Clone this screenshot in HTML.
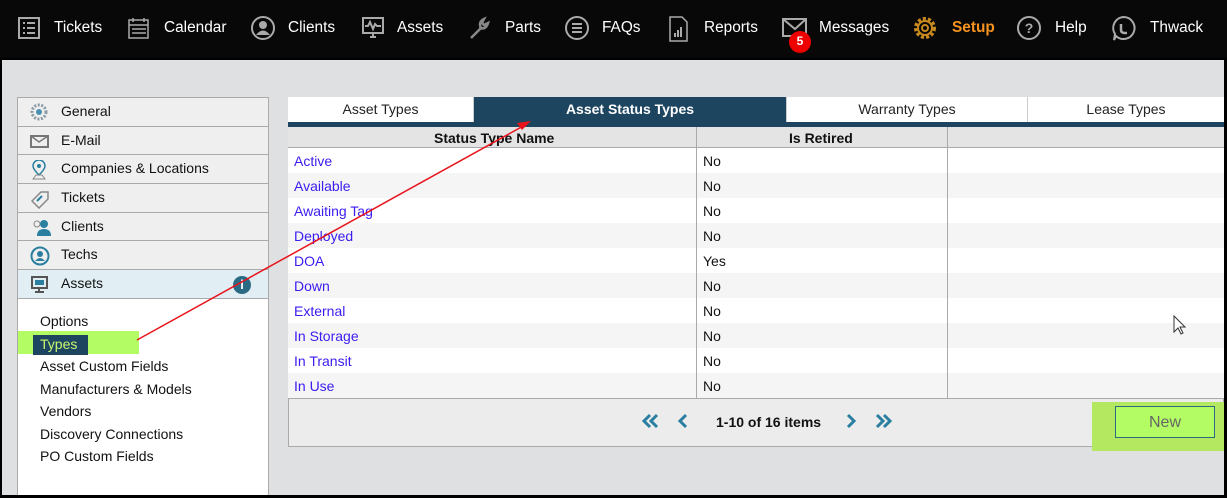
<!DOCTYPE html>
<html><head><meta charset="utf-8"><style>
*{box-sizing:border-box;margin:0;padding:0}
body{width:1227px;height:498px;background:#000;font-family:"Liberation Sans",sans-serif;position:relative;overflow:hidden;font-size:14px}
.nav{position:absolute;left:0;top:0;width:1227px;height:58px;background:#080808;color:#fff;font-size:15.4px}
.ni{position:absolute;top:17px;height:22px;line-height:22px;white-space:nowrap}
.ni svg{position:absolute;left:0;top:-1px}
.main{position:absolute;left:2px;top:60px;width:1222px;height:435px;background:#dfe0e2}
.side{position:absolute;left:17px;top:97px;width:252px;height:398px;background:#fff;border:1px solid #aaa;border-bottom:none}
.si{height:28.7px;border-bottom:1px solid #aaa;background:#efefef;position:relative;line-height:27px;padding-left:43px;color:#111}
.si svg{position:absolute;left:12px;top:5px}
.sub{position:absolute;left:22px;font-size:14px;color:#111}
.tbl{position:absolute;left:288px;top:97px;width:936px;height:350px;background:#ececec;border:1px solid #aaa;border-top:none}
.tabs{position:absolute;left:288px;top:97px;width:936px;height:25px;background:#fff}
.tab{position:absolute;top:0;height:25px;line-height:24px;text-align:center;color:#222;border-right:1px solid #ccc}
.bar{position:absolute;left:288px;top:122px;width:936px;height:5px;background:#1e4560}
.hdr{position:absolute;left:288px;top:127px;width:936px;height:21px;background:#e4e4e4;border-bottom:1px solid #aaa;font-weight:bold;color:#111}
.row{position:absolute;left:288px;width:936px;height:25px;line-height:26px}
.c1{position:absolute;left:6px;color:#3a1cf0}
.c2{position:absolute;left:415px;color:#111}
.vl{position:absolute;top:127px;width:1px;height:271px;background:#aaa}
</style></head><body>
<div class="nav">
 <div class="ni" style="left:17px;padding-left:37px"><svg width="24" height="24"><rect x="2" y="2" width="20" height="20" fill="none" stroke="#aaa" stroke-width="2"/><path d="M6 7h2M10 7h8M6 12h2M10 12h8M6 17h2M10 17h8" stroke="#aaa" stroke-width="2"/></svg>Tickets</div>
 <div class="ni" style="left:127px;padding-left:37px"><svg width="24" height="24"><rect x="2" y="4" width="19" height="18" fill="none" stroke="#aaa" stroke-width="1.5"/><path d="M2 9h19M6 2v4M17 2v4M5 13h14M5 17h14" stroke="#aaa" stroke-width="1.5"/></svg>Calendar</div>
 <div class="ni" style="left:250px;padding-left:38px"><svg width="26" height="26"><circle cx="13" cy="12" r="11" fill="none" stroke="#aaa" stroke-width="2"/><circle cx="13" cy="9" r="4" fill="#aaa"/><path d="M6 19q7-9 14 0z" fill="#aaa"/></svg>Clients</div>
 <div class="ni" style="left:361px;padding-left:36px"><svg width="24" height="24"><rect x="2" y="2" width="20" height="15" fill="none" stroke="#aaa" stroke-width="2"/><path d="M4 10h3l2-4 3 7 2-5 2 2h4M9 21h6M12 17v4" stroke="#aaa" stroke-width="2" fill="none"/></svg>Assets</div>
 <div class="ni" style="left:467px;padding-left:38px"><svg width="26" height="26"><path d="M4 22l10-10M14 12q-3-6 3-9l-2 4 2 2 4-2q-2 7-9 5" stroke="#888" stroke-width="2.5" fill="none"/></svg>Parts</div>
 <div class="ni" style="left:565px;padding-left:37px"><svg width="26" height="26"><circle cx="12" cy="12" r="11" fill="none" stroke="#aaa" stroke-width="2"/><path d="M7 8h10M7 12h10M7 16h10" stroke="#aaa" stroke-width="2"/></svg>FAQs</div>
 <div class="ni" style="left:668px;padding-left:36px"><svg width="22" height="26"><path d="M2 1h12l5 5v19H2z" fill="none" stroke="#aaa" stroke-width="1.5"/><path d="M7 21v-4M10 21v-7M13 21v-10" stroke="#aaa" stroke-width="2"/></svg>Reports</div>
 <div class="ni" style="left:782px;padding-left:37px"><svg width="26" height="22"><rect x="1" y="3" width="23" height="17" fill="none" stroke="#aaa" stroke-width="2"/><path d="M1 3l12 10 11-10" stroke="#aaa" stroke-width="2" fill="none"/></svg>Messages</div>
 <div style="position:absolute;left:789px;top:31px;width:22px;height:22px;border-radius:50%;background:#e00;color:#fff;font-weight:bold;font-size:12px;text-align:center;line-height:21px">5</div>
 <div class="ni" style="left:912px;padding-left:40px;color:#f7931e;font-weight:bold"><svg width="26" height="26"><circle cx="13" cy="12" r="9" fill="none" stroke="#c88a1e" stroke-width="4" stroke-dasharray="3 2"/><circle cx="13" cy="12" r="7" fill="none" stroke="#c88a1e" stroke-width="2"/><circle cx="13" cy="12" r="3" fill="none" stroke="#c88a1e" stroke-width="2"/></svg>Setup</div>
 <div class="ni" style="left:1017px;padding-left:38px"><svg width="26" height="26"><circle cx="12" cy="12" r="11" fill="none" stroke="#aaa" stroke-width="2"/><text x="12" y="17" text-anchor="middle" fill="#aaa" font-size="14" font-weight="bold" font-family="Liberation Sans">?</text></svg>Help</div>
 <div class="ni" style="left:1112px;padding-left:38px"><svg width="26" height="26"><path d="M12 1a11 11 0 1 1-8 19l-2 4 1-6A11 11 0 0 1 12 1z" fill="none" stroke="#aaa" stroke-width="2"/><path d="M9 8v6q0 3 4 3h2" stroke="#aaa" stroke-width="2.5" fill="none"/></svg>Thwack</div>
</div>
<div class="main"></div>
<div class="side">
 <div class="si"><svg width="18" height="18"><circle cx="9" cy="9" r="7" fill="none" stroke="#8a9aa5" stroke-width="3" stroke-dasharray="2 1.5"/><circle cx="9" cy="9" r="3" fill="#4a90b0"/></svg>General</div>
 <div class="si"><svg width="20" height="18"><rect x="1" y="4" width="17" height="11" fill="none" stroke="#777" stroke-width="2"/><path d="M1 4l8 6 9-6" stroke="#777" stroke-width="1.5" fill="none"/></svg>E-Mail</div>
 <div class="si"><svg width="18" height="20"><path d="M9 15q-6-6-6-9a6 6 0 0 1 12 0q0 3-6 9z" fill="none" stroke="#2a7fa0" stroke-width="1.5"/><circle cx="9" cy="6" r="2" fill="#2a7fa0"/><path d="M3 19l3-4h6l3 4z" fill="none" stroke="#888"/></svg>Companies &amp; Locations</div>
 <div class="si"><svg width="20" height="20"><path d="M2 12l9-9h7v7l-9 9z" fill="none" stroke="#888" stroke-width="1.5"/><path d="M7 12l5-5" stroke="#2a7fa0" stroke-width="2"/></svg>Tickets</div>
 <div class="si"><svg width="22" height="20"><circle cx="7" cy="6" r="3" fill="none" stroke="#888"/><circle cx="14" cy="6" r="4" fill="#2a7fa0"/><path d="M7 18q0-7 7-7t7 7z" fill="#2a7fa0"/></svg>Clients</div>
 <div class="si"><svg width="20" height="20"><circle cx="10" cy="10" r="8.5" fill="none" stroke="#2a7fa0" stroke-width="2"/><circle cx="10" cy="8" r="3" fill="#2a7fa0"/><path d="M5 15q5-6 10 0z" fill="#2a7fa0"/></svg>Techs</div>
 <div class="si" style="background:#e1eff5"><svg width="20" height="20"><rect x="2" y="2" width="15" height="11" fill="none" stroke="#555" stroke-width="2"/><rect x="5" y="5" width="9" height="5" fill="#2a7fa0"/><path d="M9 13v3M5 17h9" stroke="#555" stroke-width="2"/></svg>Assets
  <div style="position:absolute;left:215px;top:6px;width:18px;height:18px;border-radius:50%;background:#2a6a85;color:#fff;font-weight:bold;font-size:13px;text-align:center;line-height:18px">i</div></div>
 <div style="position:absolute;left:0;top:233px;width:121px;height:23px;background:#b3fc63"></div>
 <div style="position:absolute;left:15px;top:237px;width:55px;height:20px;background:#1e4560"></div>
 <div class="sub" style="top:215px">Options</div>
 <div class="sub" style="top:238px;color:#c8f870">Types</div>
 <div class="sub" style="top:260px">Asset Custom Fields</div>
 <div class="sub" style="top:283px">Manufacturers &amp; Models</div>
 <div class="sub" style="top:305px">Vendors</div>
 <div class="sub" style="top:328px">Discovery Connections</div>
 <div class="sub" style="top:350px">PO Custom Fields</div>
</div>
<div class="tbl"></div>
<div class="tabs">
 <div class="tab" style="left:0;width:186px">Asset Types</div>
 <div class="tab" style="left:186px;width:313px;background:#1e4560;color:#fff;font-weight:bold">Asset Status Types</div>
 <div class="tab" style="left:499px;width:241px">Warranty Types</div>
 <div class="tab" style="left:740px;width:196px;border:none">Lease Types</div>
</div>
<div class="bar"></div>
<div class="hdr"><span style="position:absolute;left:146px;top:3px">Status Type Name</span><span style="position:absolute;left:501px;top:3px">Is Retired</span></div>
<div class="row" style="top:148px;background:#fff"><span class="c1">Active</span><span class="c2">No</span></div>
<div class="row" style="top:173px;background:#f5f5f5"><span class="c1">Available</span><span class="c2">No</span></div>
<div class="row" style="top:198px;background:#fff"><span class="c1">Awaiting Tag</span><span class="c2">No</span></div>
<div class="row" style="top:223px;background:#f5f5f5"><span class="c1">Deployed</span><span class="c2">No</span></div>
<div class="row" style="top:248px;background:#fff"><span class="c1">DOA</span><span class="c2">Yes</span></div>
<div class="row" style="top:273px;background:#f5f5f5"><span class="c1">Down</span><span class="c2">No</span></div>
<div class="row" style="top:298px;background:#fff"><span class="c1">External</span><span class="c2">No</span></div>
<div class="row" style="top:323px;background:#f5f5f5"><span class="c1">In Storage</span><span class="c2">No</span></div>
<div class="row" style="top:348px;background:#fff"><span class="c1">In Transit</span><span class="c2">No</span></div>
<div class="row" style="top:373px;background:#f5f5f5;border-bottom:1px solid #aaa;height:26px"><span class="c1">In Use</span><span class="c2">No</span></div>
<div class="vl" style="left:696px"></div><div class="vl" style="left:947px"></div>
<svg style="position:absolute;left:640px;top:412px" width="260" height="20"><g stroke="#2a7fa0" stroke-width="3" fill="none"><path d="M10 3l-6 6 6 6M17 3l-6 6 6 6M46 3l-6 6 6 6M208 3l6 6-6 6M237 3l6 6-6 6M244 3l6 6-6 6"/></g></svg>
<div style="position:absolute;left:716px;top:414px;color:#111;font-weight:bold">1-10 of 16 items</div>
<div style="position:absolute;left:1092px;top:402px;width:132px;height:49px;background:#b3e860"></div>
<div style="position:absolute;left:1115px;top:406px;width:100px;height:32px;background:#b3fc63;border:1px solid #2a6a85;color:#666;font-size:16px;text-align:center;line-height:32px">New</div>
<svg style="position:absolute;left:0;top:0" width="1227" height="498"><line x1="137" y1="340" x2="525" y2="125" stroke="#e8141c" stroke-width="1.5"/><path d="M531 121l-14 2 5 7z" fill="#e8141c"/><path d="M1174 316v16l4-4 3 6 2-1-3-6h5z" fill="#fff" stroke="#333"/></svg>
</body></html>
